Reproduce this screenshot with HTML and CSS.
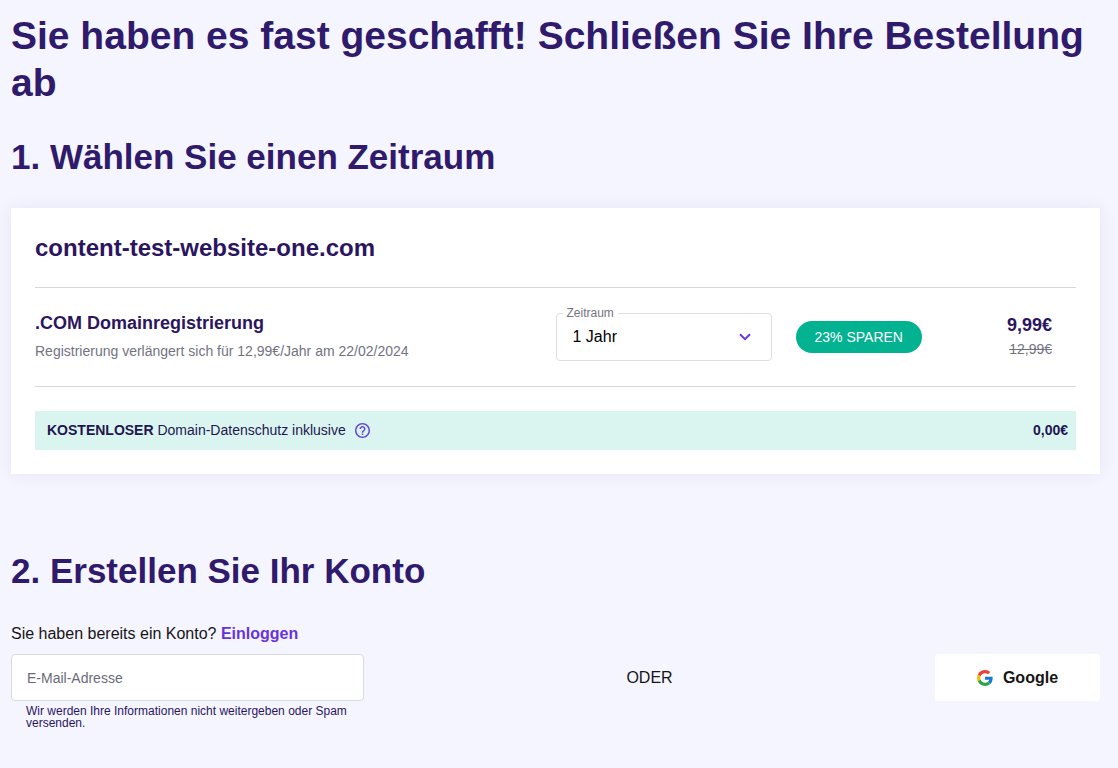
FILE: index.html
```html
<!DOCTYPE html>
<html lang="de">
<head>
<meta charset="utf-8">
<meta name="viewport" content="width=device-width, initial-scale=1">
<title>Bestellung abschließen</title>
<link rel="stylesheet" href="styles.css">
</head>
<body>
<main class="checkout">
  <h1 class="title">Sie haben es fast geschafft! Schließen Sie Ihre Bestellung ab</h1>

  <section class="period">
    <h2 class="heading">1. Wählen Sie einen Zeitraum</h2>
    <div class="card">
      <h3 class="domain">content-test-website-one.com</h3>
      <div class="product">
        <div class="product-info">
          <h4 class="product-name">.COM Domainregistrierung</h4>
          <p class="product-note">Registrierung verlängert sich für 12,99€/Jahr am 22/02/2024</p>
        </div>
        <div class="product-options">
          <div class="select-field">
            <label class="select-label" for="period">Zeitraum</label>
            <select class="select" id="period">
              <option>1 Jahr</option>
            </select>
            <svg class="chevron" viewBox="0 0 12 8" aria-hidden="true"><path d="M1 1.2 6 6.2 11 1.2"/></svg>
          </div>
          <span class="badge">23% SPAREN</span>
          <div class="prices">
            <span class="price">9,99€</span>
            <s class="old-price">12,99€</s>
          </div>
        </div>
      </div>
      <div class="privacy">
        <p class="privacy-text"><strong>KOSTENLOSER</strong> Domain-Datenschutz inklusive</p>
        <button class="help" type="button" aria-label="Hilfe">
          <svg class="help-icon" viewBox="2 2 20 20" aria-hidden="true"><path d="M11 18h2v-2h-2v2zm1-16C6.480 2 2 6.480 2 12s4.480 10 10 10 10-4.480 10-10S17.520 2 12 2zm0 18c-4.410 0-8-3.590-8-8s3.590-8 8-8 8 3.590 8 8-3.590 8-8 8zm0-14c-2.210 0-4 1.790-4 4h2c0-1.100.9-2 2-2s2 .9 2 2c0 2-3 1.750-3 5h2c0-2.250 3-2.500 3-5 0-2.210-1.790-4-4-4z"/></svg>
        </button>
        <strong class="privacy-price">0,00€</strong>
      </div>
    </div>
  </section>

  <section class="account">
    <h2 class="heading">2. Erstellen Sie Ihr Konto</h2>
    <p class="login">Sie haben bereits ein Konto? <a class="login-link" href="#login">Einloggen</a></p>
    <div class="signup">
      <div class="email-field">
        <input class="email" type="email" placeholder="E-Mail-Adresse" aria-label="E-Mail-Adresse" aria-describedby="email-note">
        <p class="email-note" id="email-note">Wir werden Ihre Informationen nicht weitergeben oder Spam versenden.</p>
      </div>
      <span class="or">ODER</span>
      <button class="google" type="button">
        <svg class="google-icon" viewBox="0 0 48 48" aria-hidden="true">
          <path fill="#ea4335" d="M24 9.500c3.540 0 6.710 1.220 9.210 3.600l6.850-6.850C35.900 2.380 30.470 0 24 0 14.620 0 6.510 5.380 2.560 13.220l7.980 6.190C12.430 13.720 17.740 9.500 24 9.500z"/>
          <path fill="#1976d2" d="M46.980 24.550c0-1.570-.15-3.090-.38-4.550H24v9.020h12.940c-.58 2.960-2.260 5.480-4.780 7.180l7.730 6c4.510-4.180 7.090-10.360 7.090-17.650z"/>
          <path fill="#fbbc05" d="M10.530 28.590c-.48-1.450-.76-2.990-.76-4.590s.27-3.140.76-4.590l-7.980-6.190C.92 16.460 0 20.120 0 24s.92 7.540 2.560 10.780z"/>
          <path fill="#28a745" d="M24 48c6.480 0 11.930-2.130 15.890-5.810l-7.730-6c-2.150 1.450-4.920 2.300-8.160 2.300-6.260 0-11.570-4.220-13.470-9.910l-7.980 6.190C6.510 42.620 14.620 48 24 48z"/>
        </svg>
        Google
      </button>
    </div>
  </section>
</main>
</body>
</html>
```
FILE: styles.css
```css
* {
  box-sizing: border-box;
}

body {
  margin: 0;
  background: #f5f5ff;
  color: #161616;
  font-family: "Liberation Sans", Helvetica, Arial, sans-serif;
  font-size: 16px;
  line-height: 24px;
}

h1, h2, h3, h4, p {
  margin: 0;
}

.checkout {
  padding: 12px 18px 32px 11px;
}

.title {
  color: #2f1a6b;
  font-size: 39px;
  line-height: 47px;
}

.heading {
  color: #2f1a6b;
  font-size: 35px;
  line-height: 46px;
}

.period {
  margin-top: 28px;
}

.card {
  margin-top: 28px;
  padding: 24px;
  background: #fff;
  box-shadow: 0 0 16px rgba(47, 26, 107, 0.08);
}

.domain {
  padding-bottom: 24px;
  border-bottom: 1px solid #d8d8dc;
  color: #2b155f;
  font-size: 24px;
  line-height: 31px;
}

.product {
  display: grid;
  grid-template-columns: 1fr 1fr;
  align-items: center;
  padding: 24px 0;
  border-bottom: 1px solid #d8d8dc;
}

.product-name {
  color: #2b155f;
  font-size: 18px;
  line-height: 22px;
}

.product-note {
  margin-top: 6px;
  color: #73737f;
  font-size: 14px;
  line-height: 22px;
}

.product-options {
  display: flex;
  align-items: center;
  gap: 24px;
}

.select-field {
  position: relative;
  width: 216px;
}

.select {
  display: block;
  width: 100%;
  height: 48px;
  padding: 0 16px;
  border: 1px solid #dedee2;
  border-radius: 4px;
  background: #fff;
  color: #000;
  font: inherit;
  appearance: none;
}

.select-label {
  position: absolute;
  top: -8px;
  left: 7px;
  padding: 0 4px;
  background: #fff;
  color: #73737f;
  font-size: 12px;
  line-height: 16px;
}

.chevron {
  position: absolute;
  top: 20px;
  right: 21px;
  width: 12px;
  height: 8px;
  fill: none;
  stroke: #6a35e0;
  stroke-width: 2;
  pointer-events: none;
}

.badge {
  padding: 4px 19px;
  border-radius: 16px;
  background: #02b290;
  color: #fff;
  font-size: 14px;
}

.prices {
  display: flex;
  flex-direction: column;
  margin-left: auto;
  padding-right: 24px;
  text-align: right;
}

.price {
  color: #2b155f;
  font-size: 18px;
  font-weight: 700;
}

.old-price {
  color: #73737f;
  font-size: 14px;
}

.privacy {
  display: flex;
  align-items: center;
  margin-top: 24px;
  padding: 8px 8px 8px 12px;
  background: #daf5ef;
  color: #1f1551;
  font-size: 14px;
  line-height: 23px;
}

.help {
  display: flex;
  margin-left: 9px;
  padding: 0;
  border: 0;
  background: none;
}

.help-icon {
  width: 15px;
  height: 15px;
  fill: #6747d9;
}

.privacy-price {
  margin-left: auto;
}

.account {
  margin-top: 74px;
}

.login {
  margin-top: 28px;
}

.login-link {
  color: #6733d9;
  font-weight: 700;
  text-decoration: none;
}

.signup {
  display: flex;
  align-items: flex-start;
  justify-content: space-between;
  margin-top: 8px;
}

.email-field {
  width: 353px;
}

.email {
  display: block;
  width: 100%;
  height: 47px;
  padding: 0 15px;
  border: 1px solid #d9d9e3;
  border-radius: 4px;
  background: #fff;
  color: #161616;
  font: inherit;
  font-size: 14px;
}

.email::placeholder {
  color: #6b6b7b;
}

.email-note {
  margin-top: 4px;
  padding: 0 15px;
  color: #2b155f;
  font-size: 12px;
  line-height: 12px;
}

.or {
  line-height: 47px;
}

.google {
  display: flex;
  align-items: center;
  justify-content: center;
  gap: 10px;
  width: 165px;
  height: 47px;
  padding: 0;
  border: 0;
  border-radius: 4px;
  background: #fff;
  color: #161616;
  font: inherit;
  font-weight: 700;
}

.google-icon {
  width: 16px;
  height: 16px;
}
```
